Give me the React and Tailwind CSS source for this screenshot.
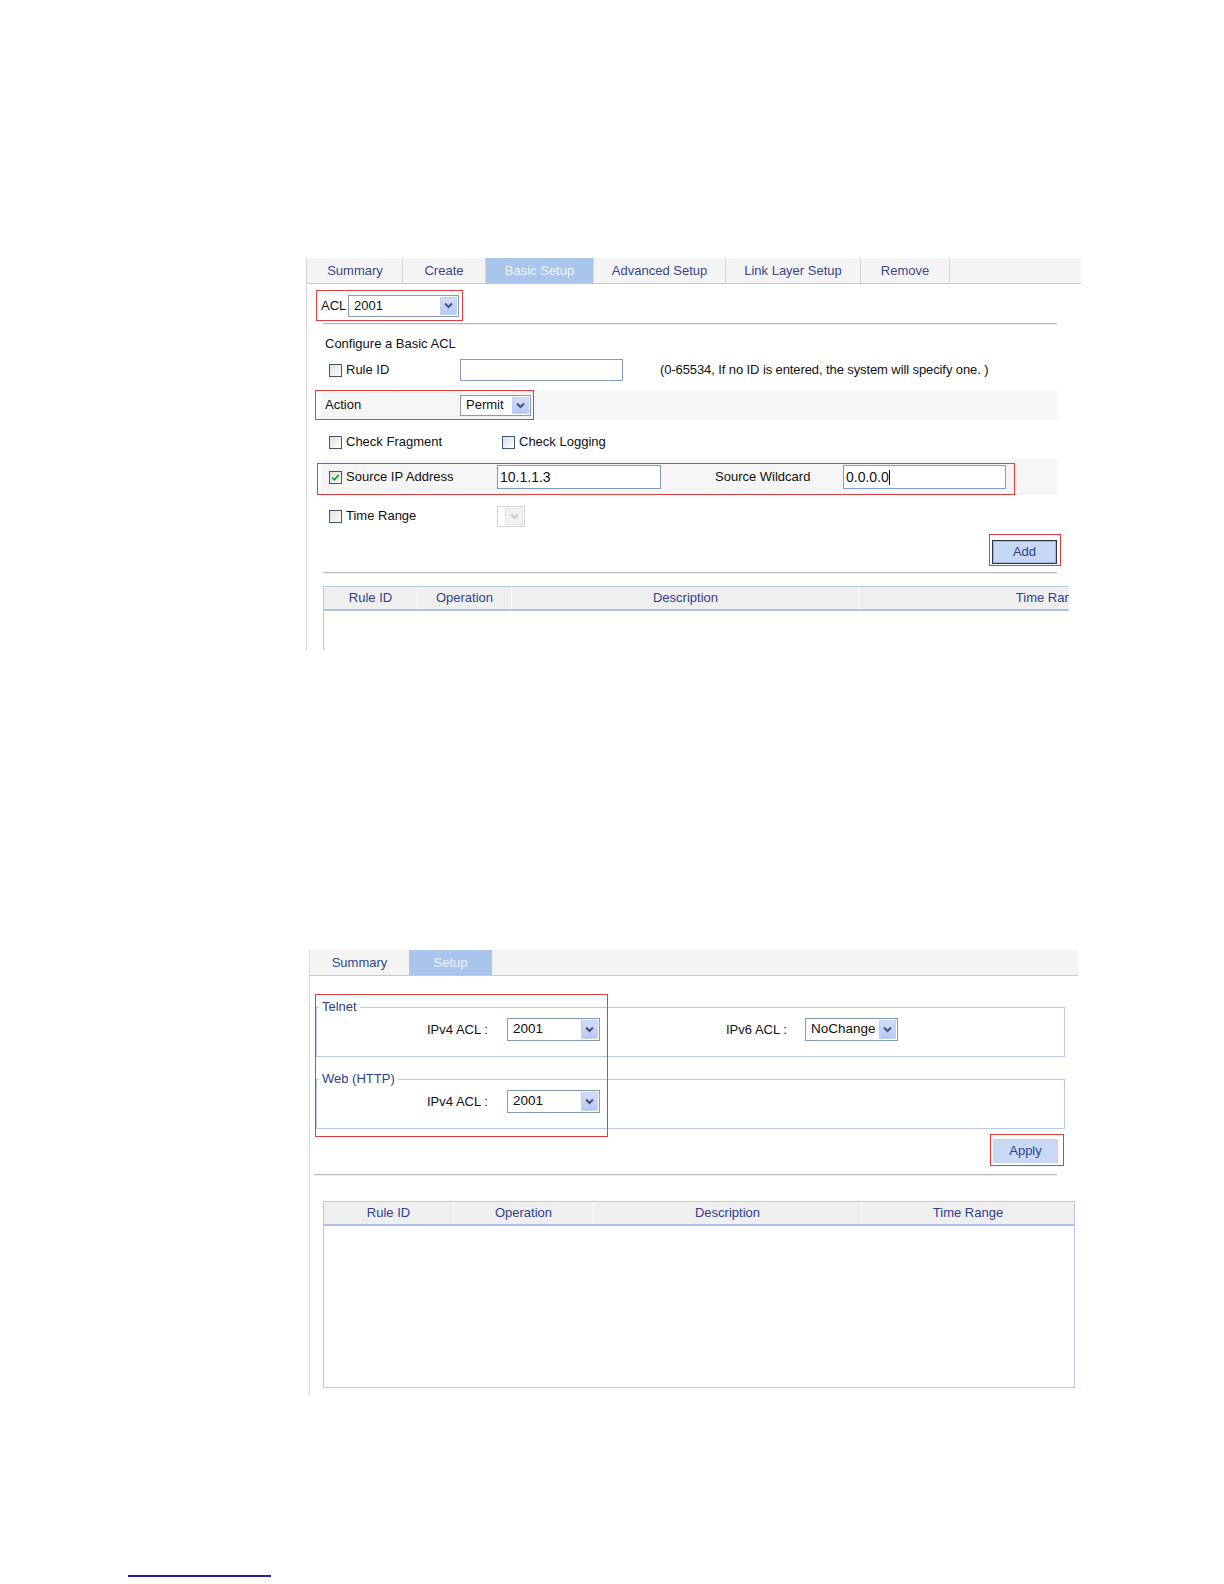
import React from "react";

function Chevron({ color = "#3f5585" }) {
  return (
    <svg width="9" height="7" viewBox="0 0 9 7">
      <path d="M1 1.5 L4.5 5 L8 1.5" fill="none" stroke={color} strokeWidth="2" />
    </svg>
  );
}

function Select({ value, w, h = 22, text = "text-[13px]", disabled = false }) {
  return (
    <div
      className={`flex items-stretch bg-white border ${disabled ? "border-[#d4d4d4]" : "border-[#7f9db9]"} ${text}`}
      style={{ width: w, height: h }}
    >
      <div className="flex-1 flex items-center pl-[5px] text-[#111] whitespace-nowrap overflow-hidden">{value}</div>
      {disabled ? (
        <div className="w-[18px] my-[1px] mr-[1px] flex items-center justify-center bg-[#f1f1f1] border border-[#e3e3e3]">
          <Chevron color="#c8c8c8" />
        </div>
      ) : (
        <div className="w-[17px] my-[1px] mr-[1px] flex items-center justify-center bg-gradient-to-b from-[#d3defa] to-[#b7c9f0] border border-[#c0d1f3]">
          <Chevron />
        </div>
      )}
    </div>
  );
}

function Checkbox({ checked = false }) {
  return (
    <div className="w-[13px] h-[13px] border border-[#3b5878] bg-gradient-to-br from-[#dedede] to-white flex items-center justify-center shrink-0">
      {checked && (
        <svg width="9" height="9" viewBox="0 0 9 9">
          <path d="M1.2 4.6 L3.4 6.8 L7.8 1.8" fill="none" stroke="#22a322" strokeWidth="1.8" />
        </svg>
      )}
    </div>
  );
}

function Input({ value, w, h = 22, focused = false }) {
  return (
    <div
      className={`flex items-center bg-white border ${focused ? "border-[#7d9fd0]" : "border-[#7f9db9]"} pl-[2px] text-[14px] text-[#111]`}
      style={{ width: w, height: h }}
    >
      {value}
      {focused && <span className="inline-block w-px h-[15px] bg-black" />}
    </div>
  );
}

function Divider({ ml, w }) {
  return (
    <div style={{ marginLeft: ml, width: w }}>
      <div className="h-px bg-[#bcbcbc]" />
      <div className="h-px bg-[#ececec]" />
    </div>
  );
}

function Red({ left, top, w, h }) {
  return (
    <div
      className="absolute border-[1.5px] border-[#e23c3f] pointer-events-none"
      style={{ left, top, width: w, height: h }}
    />
  );
}

function TableHeader({ cols, h = 25 }) {
  return (
    <div className="flex bg-[#efefef] border-t border-[#b5cbe9] border-b-2 border-b-[#a9c3ea]" style={{ height: h }}>
      {cols.map(([label, w], i) => (
        <div
          key={i}
          className={`shrink-0 flex items-center justify-center text-[13px] text-[#2e418c] ${i < cols.length - 1 ? "border-r border-r-white" : ""}`}
          style={{ width: w }}
        >
          {label}
        </div>
      ))}
    </div>
  );
}

export default function App() {
  const tabs1 = [
    ["Summary", 95],
    ["Create", 83],
    ["Basic Setup", 108, true],
    ["Advanced Setup", 132],
    ["Link Layer Setup", 135],
    ["Remove", 89],
  ];
  return (
    <div className="w-[1224px] h-[1584px] bg-white flex flex-col font-['Liberation_Sans',Arial,sans-serif] text-[13px] text-[#111]">
      {/* Panel 1 */}
      <div className="relative ml-[306px] mt-[258px] w-[775px] h-[392px] border-l border-[#d9d9d9] overflow-hidden shrink-0">
        <div className="flex h-[26px] bg-[#f4f4f4] border-b border-[#c9c9c9] pl-[1px]">
          {tabs1.map(([t, w, active]) => (
            <div
              key={t}
              className={`shrink-0 flex items-center justify-center border-r border-[#d7d7d7] ${active ? "bg-[#a9c5ec] text-[#eef4fc]" : "text-[#34488c]"}`}
              style={{ width: w }}
            >
              {t}
            </div>
          ))}
        </div>

        <div className="ml-[9px] mt-[6px] w-[147px] h-[31px] border-[1.5px] border-[#e23c3f] flex items-center pl-[4px]">
          <span className="w-[27px]">ACL</span>
          <Select value="2001" w={111} h={22} />
        </div>
        <div className="h-[2px]" />
        <Divider ml={16} w={734} />

        <div className="mt-[8px] h-[22px] pl-[18px] flex items-center">Configure a Basic ACL</div>

        <div className="mt-[4px] h-[22px] pl-[22px] flex items-center">
          <div className="w-[131px] flex items-center gap-[4px]">
            <Checkbox />
            <span>Rule ID</span>
          </div>
          <Input value="" w={163} h={22} />
          <span className="ml-[37px] tracking-[-0.1px]">(0-65534, If no ID is entered, the system will specify one. )</span>
        </div>

        <div className="mt-[9px] h-[30px] ml-[14px] w-[736px] bg-[#f5f5f5] flex items-center pl-[4px]">
          <div className="w-[135px]">Action</div>
          <Select value="Permit" w={71} h={21} />
        </div>

        <div className="mt-[11px] h-[22px] pl-[22px] flex items-center">
          <div className="w-[173px] flex items-center gap-[4px]">
            <Checkbox />
            <span>Check Fragment</span>
          </div>
          <div className="flex items-center gap-[4px]">
            <Checkbox />
            <span>Check Logging</span>
          </div>
        </div>

        <div className="mt-[6px] h-[36px] ml-[14px] w-[736px] bg-[#f5f5f5] flex items-center pl-[8px]">
          <div className="w-[168px] flex items-center gap-[4px]">
            <Checkbox checked />
            <span>Source IP Address</span>
          </div>
          <Input value="10.1.1.3" w={164} h={24} />
          <div className="ml-[54px] w-[128px]">Source Wildcard</div>
          <Input value="0.0.0.0" w={163} h={24} focused />
        </div>

        <div className="mt-[10px] h-[22px] pl-[22px] flex items-center">
          <div className="w-[168px] flex items-center gap-[4px]">
            <Checkbox />
            <span>Time Range</span>
          </div>
          <Select value="" w={28} h={21} disabled />
        </div>

        <div className="mt-[13px] h-[24px] w-[750px] flex justify-end">
          <div className="w-[65px] h-[24px] bg-[#c8d8f4] border border-[#2a3340] shadow-[inset_0_0_0_1px_#9fb6dd] flex items-center justify-center text-[#2e428f]">
            Add
          </div>
        </div>

        <div className="h-[8px]" />
        <Divider ml={16} w={734} />

        <div className="mt-[12px] ml-[16px] w-[746px] h-[80px] border-l border-[#b7cce9] overflow-hidden">
          <div className="w-[1020px]">
            <TableHeader
              cols={[
                ["Rule ID", 94],
                ["Operation", 94],
                ["Description", 348],
                ["Time Range", 382],
              ]}
            />
          </div>
        </div>

        <Red left={8} top={132} w={219} h={30} />
        <Red left={10} top={205} w={698} h={32} />
        <Red left={682} top={276} w={72} h={32} />
      </div>

      {/* Panel 2 */}
      <div className="relative ml-[309px] mt-[300px] w-[769px] h-[445px] border-l border-[#d9d9d9] shrink-0">
        <div className="flex h-[26px] bg-[#f4f4f4] border-b border-[#c9c9c9]">
          <div className="w-[99px] flex items-center justify-center text-[#34488c]">Summary</div>
          <div className="w-[83px] flex items-center justify-center bg-[#a9c5ec] text-[#eef4fc]">Setup</div>
        </div>

        <fieldset className="ml-[6px] mt-[22px] w-[749px] h-[59px] border border-[#b5cbe9]">
          <legend className="ml-[2px] px-[3px] leading-[18px] text-[#2c3f8c]">Telnet</legend>
          <div className="mt-[2px] h-[23px] pl-[110px] flex items-center">
            <div className="w-[80px]">IPv4 ACL :</div>
            <Select value="2001" w={93} h={23} text="text-[13.5px]" />
            <div className="ml-[126px] w-[79px]">IPv6 ACL :</div>
            <Select value="NoChange" w={93} h={23} text="text-[13.5px]" />
          </div>
        </fieldset>

        <fieldset className="ml-[6px] mt-[13px] w-[749px] h-[59px] border border-[#b5cbe9]">
          <legend className="ml-[2px] px-[3px] leading-[18px] text-[#2c3f8c]">Web (HTTP)</legend>
          <div className="mt-[2px] h-[23px] pl-[110px] flex items-center">
            <div className="w-[80px]">IPv4 ACL :</div>
            <Select value="2001" w={93} h={23} text="text-[13.5px]" />
          </div>
        </fieldset>

        <div className="mt-[10px] h-[24px] w-[748px] flex justify-end">
          <div className="w-[65px] h-[24px] bg-[#c9d9f5] border border-[#c3d2ee] flex items-center justify-center text-[#2e428f]">
            Apply
          </div>
        </div>

        <div className="h-[11px]" />
        <Divider ml={4} w={743} />

        <div className="mt-[25px] ml-[13px] w-[752px] h-[187px] border border-[#b7cce9] border-t-0">
          <TableHeader
            cols={[
              ["Rule ID", 130],
              ["Operation", 140],
              ["Description", 268],
              ["Time Range", 212],
            ]}
          />
        </div>

        <Red left={5} top={44} w={293} h={143} />
        <Red left={680} top={184} w={74} h={32} />
      </div>

      <div className="ml-[128px] mt-[180px] w-[143px] h-[2px] bg-[#22229a] shrink-0" />
    </div>
  );
}
